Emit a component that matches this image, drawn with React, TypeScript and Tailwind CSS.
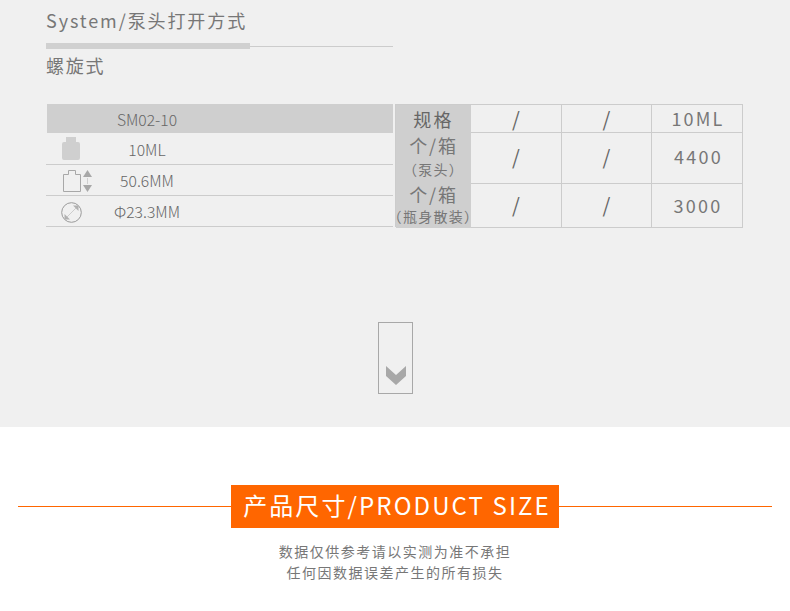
const font = { fontFamily: '"Noto Sans CJK SC", sans-serif' };

const BottleFilled = () => (
  <svg width="18" height="23" viewBox="0 0 18 23">
    <path d="M4 0h10v5h2a2 2 0 0 1 2 2v14a2 2 0 0 1-2 2H2a2 2 0 0 1-2-2V7a2 2 0 0 1 2-2h2z" fill="#cfcfcf" />
  </svg>
);

const BottleSize = () => (
  <svg width="29" height="22" viewBox="0 0 29 22" fill="none">
    <path d="M5.5 .5h7v4h5v17H.5v-17h5z" stroke="#a8a8a8" />
    <path d="M20 7l4.5-7L29 7z" fill="#a8a8a8" />
    <path d="M20 15l4.5 7L29 15z" fill="#a8a8a8" />
    <path d="M24.5 8v6" stroke="#d0d0d0" />
  </svg>
);

const Diameter = () => (
  <svg width="21" height="21" viewBox="0 0 21 21" fill="none">
    <circle cx="10.5" cy="10.5" r="9.8" stroke="#9a9a9a" />
    <path d="M5.5 15.5l10-10" stroke="#cccccc" />
    <path d="M12 3.5h5.5V9z" fill="#b0b0b0" />
    <path d="M3.5 12v5.5H9z" fill="#b0b0b0" />
  </svg>
);

const leftRows = [
  { icon: <BottleFilled />, text: "10ML", h: "h-[32px]", pad: "pt-[2px]", iconBox: "-mt-[2px]", textW: "w-[102px]" },
  { icon: <BottleSize />, text: "50.6MM", h: "h-[31px]", pad: "pt-[2px]", iconBox: "ml-[6px]", textW: "w-[90px]" },
  { icon: <Diameter />, text: "Φ23.3MM", h: "h-[31px]", pad: "pt-[2px]", iconBox: "", textW: "w-[102px]" },
];

const Slash = ({ lift = "" }: { lift?: string }) => (
  <div className={`flex items-center justify-center border-r border-b border-[#cccccc] text-[20px] text-[#666666] ${lift}`}>/</div>
);

export default function App() {
  return (
    <div className="w-[790px] h-[611px] overflow-hidden bg-white" style={font}>
      <div className="h-[427px] bg-[#f0f0f0] pl-[46px]">
        <div className="h-[43px] pt-[7px] text-[18px] leading-[26px] tracking-[1.9px] text-[#777777]">
          System/泵头打开方式
        </div>
        <div className="flex w-[347px] h-[6px] items-start">
          <div className="w-[204px] h-[6px] bg-[#d0d0d0]" />
          <div className="flex-1 h-px mt-[3px] bg-[#cccccc]" />
        </div>
        <div className="h-[55px] pt-[3px] text-[18px] leading-[26px] tracking-[1.7px] text-[#777777]">螺旋式</div>

        <div className="flex w-[697px] h-[123px]">
          <div className="w-[347px]">
            <div className="ml-px flex h-[29px] items-center justify-center bg-[#cfcfcf] pr-[146px] pt-[3px] text-[15.7px] font-light text-[#666666]">
              SM02-10
            </div>
            {leftRows.map((r) => (
              <div key={r.text} className={`flex ${r.h} items-center border-b border-[#cccccc] ${r.pad} text-[15.7px] font-light text-[#666666]`}>
                <div className={`flex w-[50px] justify-center ${r.iconBox}`}>{r.icon}</div>
                <div className={`${r.textW} text-center`}>{r.text}</div>
              </div>
            ))}
          </div>
          <div className="ml-[2px] grid w-[348px] grid-cols-[75px_91px_90px_91px] grid-rows-[28px_51px_44px] border-t border-l border-[#cccccc]">
            <div className="flex items-center justify-center bg-[#cfcfcf] text-[18px] tracking-[2.2px] text-[#666666]">规格</div>
            <Slash />
            <Slash />
            <div className="flex items-center justify-center border-r border-b border-[#cccccc] pl-[2px] text-[18px] tracking-[2.2px] text-[#777777]">10ML</div>
            <div className="flex flex-col items-center bg-[#cfcfcf] text-[#777777]">
              <div className="text-[18px] leading-[24px] tracking-[1.8px]">个/箱</div>
              <div className="text-[14px] leading-[24px] tracking-[1.3px]">（泵头）</div>
            </div>
            <Slash lift="pb-[3px]" />
            <Slash lift="pb-[3px]" />
            <div className="flex items-center justify-center border-r border-b border-[#cccccc] pb-[3px] pl-[3px] text-[18px] tracking-[2.2px] text-[#777777]">4400</div>
            <div className="flex flex-col items-center bg-[#cfcfcf] text-[#777777]">
              <div className="text-[18px] leading-[20px] tracking-[1.8px]">个/箱</div>
              <div className="mt-[3px] text-[14px] leading-[18px] tracking-[1.3px] whitespace-nowrap">（瓶身散装）</div>
            </div>
            <Slash lift="pb-[1px]" />
            <Slash lift="pb-[1px]" />
            <div className="flex items-center justify-center border-r border-b border-[#cccccc] pb-[1px] pl-[2px] text-[18px] tracking-[2.2px] text-[#777777]">3000</div>
          </div>
        </div>

        <div className="ml-[332px] mt-[95px] flex h-[72px] w-[35px] items-end justify-center border border-[#a8a8a8] pb-[8px]">
          <svg width="20" height="19" viewBox="0 0 20 19">
            <path d="M0 0l10 9L20 0v10L10 19 0 10z" fill="#a8a8a8" />
          </svg>
        </div>
      </div>

      <div className="flex items-center pl-[18px] pt-[58px]">
        <div className="h-px w-[213px] bg-[#ff6600]" />
        <div className="flex h-[43px] w-[328px] items-center justify-center bg-[#ff6600] pb-[3px] pl-[4px] text-[24px] tracking-[2.1px] text-white whitespace-nowrap">
          产品尺寸/PRODUCT SIZE
        </div>
        <div className="h-px w-[213px] bg-[#ff6600]" />
      </div>
      <div className="mt-[13px] text-center text-[14px] leading-[21px] tracking-[1.5px] text-[#777777]">
        <div>数据仅供参考请以实测为准不承担</div>
        <div>任何因数据误差产生的所有损失</div>
      </div>
    </div>
  );
}
